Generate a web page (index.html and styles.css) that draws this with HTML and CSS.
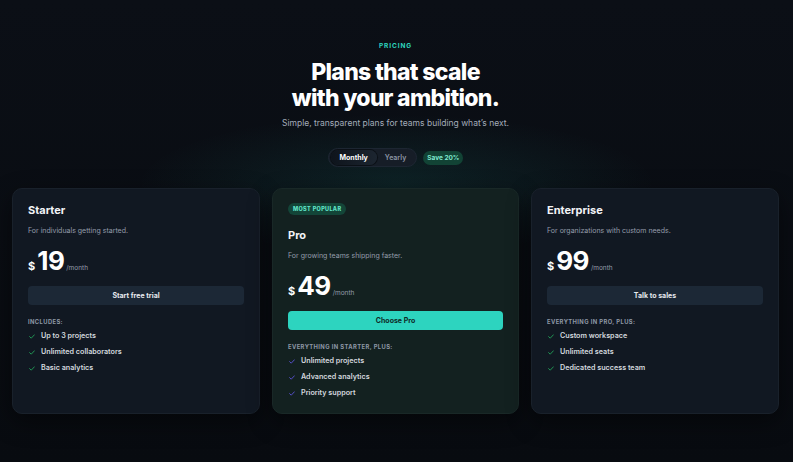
FILE: index.html
```html
<!DOCTYPE html>
<html lang="en">
<head>
<meta charset="utf-8">
<title>Pricing</title>
<link rel="stylesheet" href="styles.css">
</head>
<body>
<main class="page">
  <header class="hero">
    <div class="eyebrow">PRICING</div>
    <h1 class="title"><span class="tl">Plans that scale</span><span class="tl">with your ambition.</span></h1>
    <p class="subtitle">Simple, transparent plans for teams building what’s next.</p>
    <div class="switch-row">
      <div class="toggle">
        <span class="toggle-opt active">Monthly</span>
        <span class="toggle-opt">Yearly</span>
      </div>
      <span class="save">Save 20%</span>
    </div>
  </header>

  <section class="plans">
    <article class="card">
      <h2 class="plan-name">Starter</h2>
      <p class="plan-desc">For individuals getting started.</p>
      <div class="price"><span class="cur">$</span><span class="amt">19</span><span class="per">/month</span></div>
      <button class="btn">Start free trial</button>
      <div class="label">INCLUDES:</div>
      <ul class="features">
        <li><svg class="chk" viewBox="0 0 10 8"><path d="M1 4.2l2.7 2.6L9 1.2"/></svg>Up to 3 projects</li>
        <li><svg class="chk" viewBox="0 0 10 8"><path d="M1 4.2l2.7 2.6L9 1.2"/></svg>Unlimited collaborators</li>
        <li><svg class="chk" viewBox="0 0 10 8"><path d="M1 4.2l2.7 2.6L9 1.2"/></svg>Basic analytics</li>
      </ul>
    </article>

    <article class="card pro">
      <span class="badge">MOST POPULAR</span>
      <h2 class="plan-name">Pro</h2>
      <p class="plan-desc">For growing teams shipping faster.</p>
      <div class="price"><span class="cur">$</span><span class="amt">49</span><span class="per">/month</span></div>
      <button class="btn primary">Choose Pro</button>
      <div class="label">EVERYTHING IN STARTER, PLUS:</div>
      <ul class="features">
        <li><svg class="chk" viewBox="0 0 10 8"><path d="M1 4.2l2.7 2.6L9 1.2"/></svg>Unlimited projects</li>
        <li><svg class="chk" viewBox="0 0 10 8"><path d="M1 4.2l2.7 2.6L9 1.2"/></svg>Advanced analytics</li>
        <li><svg class="chk" viewBox="0 0 10 8"><path d="M1 4.2l2.7 2.6L9 1.2"/></svg>Priority support</li>
      </ul>
    </article>

    <article class="card">
      <h2 class="plan-name">Enterprise</h2>
      <p class="plan-desc">For organizations with custom needs.</p>
      <div class="price"><span class="cur">$</span><span class="amt">99</span><span class="per">/month</span></div>
      <button class="btn">Talk to sales</button>
      <div class="label">EVERYTHING IN PRO, PLUS:</div>
      <ul class="features">
        <li><svg class="chk" viewBox="0 0 10 8"><path d="M1 4.2l2.7 2.6L9 1.2"/></svg>Custom workspace</li>
        <li><svg class="chk" viewBox="0 0 10 8"><path d="M1 4.2l2.7 2.6L9 1.2"/></svg>Unlimited seats</li>
        <li><svg class="chk" viewBox="0 0 10 8"><path d="M1 4.2l2.7 2.6L9 1.2"/></svg>Dedicated success team</li>
      </ul>
    </article>
  </section>
</main>
</body>
</html>
```

FILE: styles.css
```css
* { box-sizing: border-box; }
html, body { margin: 0; padding: 0; }
body {
  width: 793px;
  height: 462px;
  overflow: hidden;
  font-family: Inter, "Liberation Sans", sans-serif;
  color: #e6e9ee;
  background:
    radial-gradient(ellipse 260px 70px at 50% 184px, rgba(45, 212, 191, 0.10), rgba(45, 212, 191, 0) 100%),
    linear-gradient(#0b0f16, #080b10);
}
.page { padding: 42px 14px 0 12px; }

.hero { display: flex; flex-direction: column; align-items: center; }
.eyebrow {
  font-size: 6.5px;
  font-weight: 700;
  letter-spacing: 0.14em;
  color: #2dd4bf;
  line-height: 8px;
}
.title {
  margin: 9px 0 0;
  font-size: 23px;
  font-weight: 800;
  letter-spacing: -0.03em;
  text-align: center;
  color: #ffffff;
  display: flex;
  flex-direction: column;
  align-items: center;
}
.tl { display: block; line-height: 26px; height: 26px; }
.subtitle {
  margin: 7px 0 0;
  font-size: 8.5px;
  line-height: 11px;
  color: #a3acb9;
}
.switch-row {
  margin-top: 19px;
  display: flex;
  align-items: center;
  gap: 6px;
}
.toggle {
  display: flex;
  align-items: center;
  padding: 2px;
  border-radius: 10px;
  background: #161d27;
  border: 1px solid #1d2632;
  height: 19px;
}
.toggle-opt {
  font-size: 7px;
  font-weight: 600;
  color: #8c96a4;
  padding: 0 8px;
  line-height: 15px;
  border-radius: 8px;
}
.toggle-opt.active {
  color: #ffffff;
  font-weight: 700;
  padding: 0 9px;
  background: linear-gradient(90deg, #0e141c, #1c2530);
  box-shadow: 0 0 0 1px #0b1016;
}
.save {
  font-size: 6.5px;
  font-weight: 700;
  color: #7ee8cf;
  background: #124335;
  border-radius: 7px;
  padding: 0 4px;
  line-height: 14px;
}

.plans {
  margin-top: 21px;
  display: grid;
  grid-template-columns: 248px 247px 248px;
  gap: 12px;
}
.card {
  background: #111822;
  border: 1px solid #19212b;
  border-radius: 10px;
  padding: 14px 15px 12px;
  box-shadow: 0 8px 24px rgba(0, 0, 0, 0.45);
  display: flex;
  flex-direction: column;
  align-items: stretch;
}
.card.pro { background: #132120; border-color: #192827; }

.badge {
  align-self: flex-start;
  font-size: 5.5px;
  font-weight: 800;
  letter-spacing: 0.06em;
  color: #5fe3c7;
  background: #134538;
  border-radius: 7px;
  padding: 0 5px;
  line-height: 12px;
  margin-bottom: 13px;
}
.plan-name {
  margin: 0;
  font-size: 11px;
  line-height: 14px;
  font-weight: 700;
  color: #f2f4f7;
}
.plan-desc {
  margin: 9px 0 0;
  font-size: 7px;
  line-height: 9px;
  color: #959dab;
}
.price {
  margin-top: 14px;
  display: flex;
  align-items: baseline;
  height: 24px;
}
.cur { font-size: 11px; font-weight: 700; color: #ffffff; margin-right: 2px; }
.amt { font-size: 26px; font-weight: 700; line-height: 24px; color: #ffffff; letter-spacing: -0.02em; }
.per { font-size: 6.5px; color: #959dab; margin-left: 2px; }

.btn {
  margin-top: 13px;
  height: 19px;
  border: 0;
  border-radius: 4px;
  background: #1c2836;
  color: #e6e9ee;
  font-family: inherit;
  font-size: 7px;
  font-weight: 700;
  padding: 0;
}
.btn.primary { background: #2dd4bf; color: #0e2a28; }

.label {
  margin-top: 13px;
  font-size: 5.8px;
  font-weight: 700;
  letter-spacing: 0.07em;
  color: #8d97a5;
  line-height: 7px;
}
.features {
  list-style: none;
  margin: 3px 0 0;
  padding: 0;
}
.features li {
  display: flex;
  align-items: center;
  font-size: 7.2px;
  font-weight: 600;
  color: #d3d8df;
  line-height: 16px;
}
.chk {
  width: 6px;
  height: 5px;
  margin: 0 6px 0 1px;
  fill: none;
  stroke: #22a35a;
  stroke-width: 1.5;
  stroke-linecap: round;
  stroke-linejoin: round;
}
.pro .chk { stroke: #5b54d6; }
```
